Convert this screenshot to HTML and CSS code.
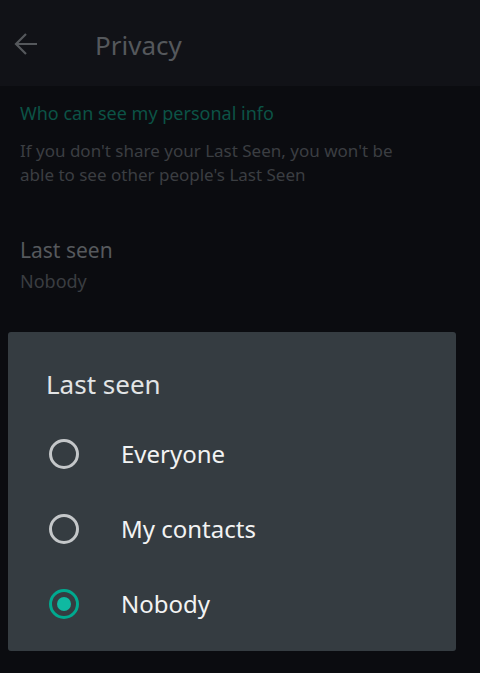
FILE: index.html
```html
<!DOCTYPE html>
<html lang="en">
<head>
    <meta charset="UTF-8">
    <meta name="viewport" content="width=device-width, initial-scale=1.0">
    <title>Privacy</title>
    <link rel="stylesheet" href="styles.css">
</head>
<body>
    <div class="toolbar">
        <svg class="back" width="26" height="26" viewBox="0 0 26 26">
            <path d="M24 13H3M13 3L3 13l10 10" fill="none" stroke="#55585c" stroke-width="2.2"/>
        </svg>
        <span class="title">Privacy</span>
    </div>

    <div class="section">
        <div class="section-title">Who can see my personal info</div>
        <div class="section-desc">If you don't share your Last Seen, you won't be able to see other people's Last Seen</div>
    </div>

    <div class="setting">
        <div class="setting-name">Last seen</div>
        <div class="setting-value">Nobody</div>
    </div>

    <!-- dialog -->
    <div class="dialog">
        <div class="dialog-title">Last seen</div>
        <div class="option">
            <span class="radio"></span>
            <span class="label">Everyone</span>
        </div>
        <div class="option">
            <span class="radio"></span>
            <span class="label">My contacts</span>
        </div>
        <div class="option">
            <span class="radio checked"></span>
            <span class="label">Nobody</span>
        </div>
    </div>
</body>
</html>
```

FILE: styles.css
```css
body {
    margin: 0;
    background-color: #0b0c10;
    font-family: "Noto Sans", "Open Sans", sans-serif;
    height: 673px;
    position: relative;
    overflow: hidden;
}
.toolbar {
    height: 86px;
    background-color: #111217;
    display: flex;
    align-items: center;
    padding-left: 13px;
}
.back {
    margin-top: 2px;
}
.title {
    margin-left: 56px;
    font-size: 26px;
    color: #55585c;
    margin-top: 4px;
}
.section {
    padding: 14px 20px 0 20px;
}
.section-title {
    font-size: 18px;
    line-height: 26px;
    color: #0c5346;
}
.section-desc {
    margin-top: 13px;
    font-size: 17px;
    line-height: 24px;
    color: #3b3e42;
    width: 400px;
}
.setting {
    padding: 48px 20px 0 20px;
}
.setting-name {
    font-size: 21px;
    line-height: 30px;
    color: #56595d;
}
.setting-value {
    font-size: 18px;
    line-height: 32px;
    color: #3a3d41;
}
.dialog {
    position: absolute;
    top: 332px;
    left: 8px;
    width: 448px;
    height: 319px;
    background-color: #353c41;
    border-radius: 3px;
    box-sizing: border-box;
    padding-top: 34px;
}
.dialog-title {
    font-size: 26px;
    line-height: 36px;
    color: #e2e4e5;
    padding-left: 38px;
    margin-bottom: 14px;
}
.option {
    display: flex;
    align-items: center;
    height: 75px;
    padding-left: 41px;
}
.radio {
    width: 24px;
    height: 24px;
    border: 3px solid #c4c7c9;
    border-radius: 50%;
    position: relative;
}
.radio.checked {
    border-color: #00a98f;
}
.radio.checked::after {
    content: "";
    position: absolute;
    left: 5px;
    top: 5px;
    width: 14px;
    height: 14px;
    border-radius: 50%;
    background-color: #0fb9a1;
}
.label {
    margin-left: 42px;
    font-size: 24px;
    color: #f2f3f3;
}
```
